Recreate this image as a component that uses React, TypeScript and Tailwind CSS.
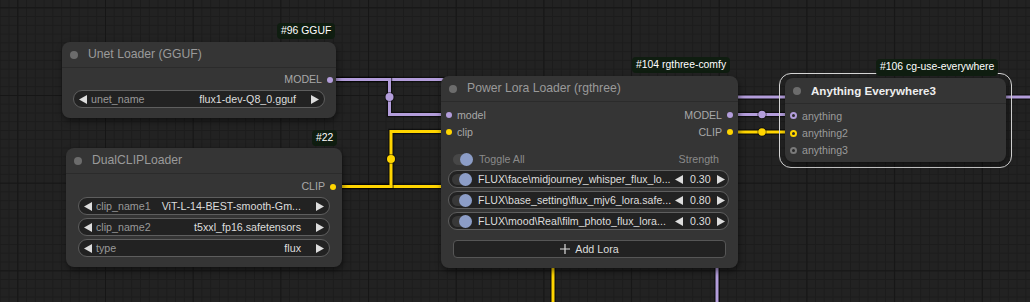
import type { ReactNode } from 'react';

const PURPLE = '#b39ddb';
const YELLOW = '#ffd500';

function Arrow({ dir }: { dir: 'left' | 'right' }) {
  return (
    <svg width="8" height="9" viewBox="0 0 8 9" className="shrink-0">
      <polygon points={dir === 'left' ? '8,0 8,9 0,4.5' : '0,0 0,9 8,4.5'} fill="#dddddd" />
    </svg>
  );
}

function Badge({ className, text }: { className: string; text: string }) {
  return (
    <div
      className={`absolute flex items-center rounded-[4px] bg-[#0f1d10] px-[4px] text-[10.4px] leading-none text-white ${className}`}
    >
      {text}
    </div>
  );
}

function Node({
  className,
  title,
  bold,
  children,
}: {
  className: string;
  title: string;
  bold?: boolean;
  children: ReactNode;
}) {
  return (
    <div
      className={`absolute flex flex-col rounded-[8px] bg-[#353535] shadow-[1px_3px_6px_rgba(0,0,0,0.5)] ${className}`}
    >
      <div className="flex h-[26px] shrink-0 items-center border-b border-[#2b2b2b] pl-[8px]">
        <span className="h-[8px] w-[8px] rounded-full bg-[#6c6c6c]" />
        <span
          className={
            bold
              ? 'ml-[10px] text-[11.6px] font-bold leading-none text-[#eeeeee]'
              : 'ml-[10px] text-[12.2px] leading-none text-[#9a9a9a]'
          }
        >
          {title}
        </span>
      </div>
      {children}
    </div>
  );
}

function Slot({ side, label, color }: { side: 'in' | 'out'; label: string; color: string }) {
  const dot = <span className="h-[6px] w-[6px] shrink-0 rounded-full" style={{ backgroundColor: color }} />;
  return (
    <div
      className={`flex h-[17px] items-center gap-[5px] text-[10.6px] leading-none text-[#a8a8a8] ${
        side === 'out' ? 'justify-end' : ''
      }`}
    >
      {side === 'in' ? dot : null}
      <span>{label}</span>
      {side === 'out' ? dot : null}
    </div>
  );
}

function Ring({ label, color }: { label: string; color: string }) {
  return (
    <div className="flex h-[17.4px] items-center gap-[5px] pl-[5px] text-[10.6px] leading-none text-[#9a9a9a]">
      <span className="h-[7px] w-[7px] shrink-0 rounded-full border-2 bg-[#2b2b2b]" style={{ borderColor: color }} />
      <span>{label}</span>
    </div>
  );
}

function Combo({ label, value }: { label: string; value: string }) {
  return (
    <div className="flex h-[18px] items-center rounded-full border border-[#5e5e5e] bg-[#222222] pl-[5px] pr-[5px] text-[10.7px] leading-[14px]">
      <Arrow dir="left" />
      <span className="ml-[4px] shrink-0 text-[#999999]">{label}</span>
      <span className="ml-[8px] min-w-0 flex-1 whitespace-nowrap text-right text-[#dddddd]">{value}</span>
      <span className="ml-[15px] flex">
        <Arrow dir="right" />
      </span>
    </div>
  );
}

function Toggle({ track }: { track: string }) {
  return (
    <span className={`flex h-[11px] w-[20px] shrink-0 items-center justify-end rounded-full ${track}`}>
      <span className="h-[13px] w-[13px] shrink-0 rounded-full bg-[#8c9dc7]" />
    </span>
  );
}

function LoraRow({ name, strength }: { name: string; strength: string }) {
  return (
    <div className="flex h-[18px] items-center rounded-full border border-[#5e5e5e] bg-[#222222] pl-[3px] pr-[5px] text-[10.6px] leading-[14px] text-[#dddddd]">
      <Toggle track="bg-[#383838]" />
      <span className="ml-[6px] w-[193px] shrink-0 whitespace-nowrap">{name}</span>
      <span className="ml-[4px] flex">
        <Arrow dir="left" />
      </span>
      <span className="ml-[7px] w-[20px] text-center">{strength}</span>
      <span className="ml-[7px] flex">
        <Arrow dir="right" />
      </span>
    </div>
  );
}

function Wire({ d, color }: { d: string; color: string }) {
  return (
    <g fill="none">
      <path d={d} stroke="#000" strokeOpacity="0.55" strokeWidth="5.5" />
      <path d={d} stroke={color} strokeWidth="3" />
    </g>
  );
}

function Knot({ x, y, r, color }: { x: number; y: number; r: number; color: string }) {
  return (
    <g>
      <circle cx={x} cy={y} r={r + 1} fill="#000" fillOpacity="0.45" />
      <circle cx={x} cy={y} r={r} fill={color} />
    </g>
  );
}

export default function App() {
  return (
    <div className="relative h-[302px] w-[1030px] overflow-hidden bg-[#222222] bg-[linear-gradient(to_right,#161616_1px,transparent_1px),linear-gradient(to_bottom,#161616_1px,transparent_1px),linear-gradient(to_right,#1c1c1c_1px,transparent_1px),linear-gradient(to_bottom,#1c1c1c_1px,transparent_1px)] bg-[size:87.7px_87.7px,87.7px_87.7px,8.77px_8.77px,8.77px_8.77px] bg-[position:17.3px_7.3px] font-['Liberation_Sans',Arial,sans-serif]">
      <svg className="absolute inset-0" width="1030" height="302">
        <Wire d="M333 79.5 H600 V97 H1030" color={PURPLE} />
        <Wire d="M333 79.5 H389.5 V114.5 H449" color={PURPLE} />
        <Wire d="M717 200 V302" color={PURPLE} />
        <Wire d="M730 114.5 H794" color={PURPLE} />
        <Wire d="M336 186.5 H553 V302" color={YELLOW} />
        <Wire d="M336 186.5 H391 V131.5 H449" color={YELLOW} />
        <Wire d="M730 132 H794" color={YELLOW} />
        <Knot x={389.5} y={97} r={4} color={PURPLE} />
        <Knot x={391} y={159} r={4} color={YELLOW} />
        <Knot x={762} y={114.5} r={3.7} color={PURPLE} />
        <Knot x={762} y={132} r={3.7} color={YELLOW} />
      </svg>

      {/* #96 unet loader */}
      <Badge className="left-[277px] top-[23px] h-[16px]" text="#96 GGUF" />
      <Node className="left-[62px] top-[42px] h-[76px] w-[274px]" title="Unet Loader (GGUF)">
        <div className="flex flex-col px-[11px] pt-[3px]">
          <div className="-mr-[8px]">
            <Slot side="out" label="MODEL" color={PURPLE} />
          </div>
          <div className="mt-[2px]">
            <Combo label="unet_name" value="flux1-dev-Q8_0.gguf" />
          </div>
        </div>
      </Node>

      {/* #22 dual clip */}
      <Badge className="left-[312px] top-[130px] h-[16px]" text="#22" />
      <Node className="left-[66px] top-[148px] h-[119px] w-[276px]" title="DualCLIPLoader">
        <div className="flex flex-col px-[12px] pt-[4px]">
          <div className="-mr-[6px]">
            <Slot side="out" label="CLIP" color={YELLOW} />
          </div>
          <div className="mt-[2px] flex flex-col gap-[3px]">
            <Combo label="clip_name1" value="ViT-L-14-BEST-smooth-Gm..." />
            <Combo label="clip_name2" value="t5xxl_fp16.safetensors" />
            <Combo label="type" value="flux" />
          </div>
        </div>
      </Node>

      {/* #104 power lora */}
      <Badge className="left-[632px] top-[57px] h-[16px]" text="#104 rgthree-comfy" />
      <Node className="left-[441px] top-[76px] h-[192px] w-[297px]" title="Power Lora Loader (rgthree)">
        <div className="flex flex-col pt-[4.5px]">
          <div className="grid grid-cols-2 px-[5px]">
            <div className="flex flex-col">
              <Slot side="in" label="model" color={PURPLE} />
              <Slot side="in" label="clip" color={YELLOW} />
            </div>
            <div className="flex flex-col">
              <Slot side="out" label="MODEL" color={PURPLE} />
              <Slot side="out" label="CLIP" color={YELLOW} />
            </div>
          </div>
          <div className="mt-[10px] flex h-[17px] items-center pl-[12px] pr-[19px] text-[10.7px] leading-none text-[#8a8a8a]">
            <Toggle track="bg-[#474747]" />
            <span className="ml-[6px]">Toggle All</span>
            <span className="ml-auto">Strength</span>
          </div>
          <div className="mt-[2.5px] flex flex-col gap-[3px] pl-[7px] pr-[9px]">
            <LoraRow name="FLUX\face\midjourney_whisper_flux_lo..." strength="0.30" />
            <LoraRow name="FLUX\base_setting\flux_mjv6_lora.safe..." strength="0.80" />
            <LoraRow name="FLUX\mood\Real\film_photo_flux_lora..." strength="0.30" />
          </div>
          <div className="mx-[12px] mt-[10px] flex h-[18px] items-center justify-center gap-[5px] rounded-[4px] border border-[#565656] bg-[#222222] text-[10.7px] leading-none text-[#dddddd]">
            <svg width="10" height="10" viewBox="0 0 10 10">
              <path d="M5 0 V10 M0 5 H10" stroke="#dddddd" strokeWidth="1.2" />
            </svg>
            <span>Add Lora</span>
          </div>
        </div>
      </Node>

      {/* #106 anything everywhere (selected) */}
      <div className="absolute left-[779px] top-[73px] h-[95px] w-[233px] rounded-[12px] border border-[#d6d6d6]" />
      <Node className="left-[785px] top-[78px] h-[84px] w-[221px]" title="Anything Everywhere3" bold>
        <div className="flex flex-col pt-[3.3px]">
          <Ring label="anything" color={PURPLE} />
          <Ring label="anything2" color={YELLOW} />
          <Ring label="anything3" color="#7a7a7a" />
        </div>
      </Node>
      <Badge className="left-[876px] top-[59px] h-[17px]" text="#106 cg-use-everywhere" />
    </div>
  );
}
